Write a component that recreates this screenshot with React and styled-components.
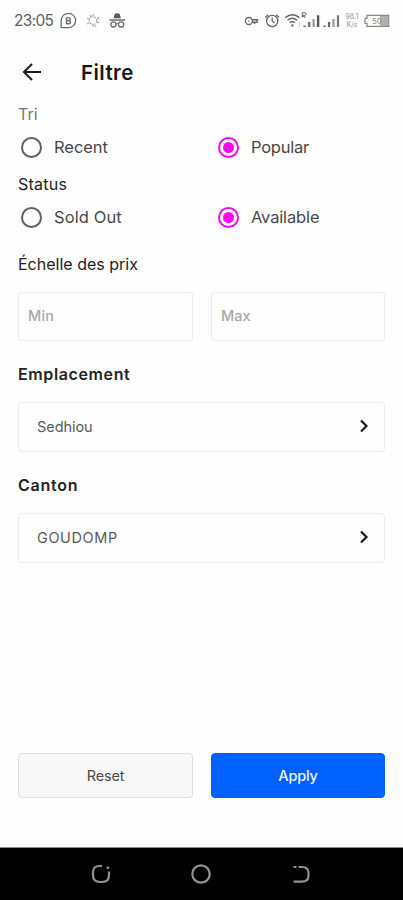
import { useState } from 'react';
import styled, { createGlobalStyle } from 'styled-components';

const GlobalStyle = createGlobalStyle`
  * {
    box-sizing: border-box;
  }

  body {
    margin: 0;
    background: #fefefe;
    font-family: Inter, 'Liberation Sans', sans-serif;
  }
`;

const Screen = styled.div`
  display: flex;
  flex-direction: column;
  width: 403px;
  height: 900px;
  overflow: hidden;
  background: #fefefe;
`;

const StatusBar = styled.div`
  display: flex;
  align-items: center;
  justify-content: space-between;
  height: 40px;
  padding: 0 12px 0 14px;
`;

const Clock = styled.span`
  width: 46px;
  font-size: 15.5px;
  letter-spacing: -0.7px;
  color: #5c5c5c;
`;

const StatusGroup = styled.div`
  display: flex;
  align-items: center;
`;

const Header = styled.header`
  display: flex;
  align-items: center;
  gap: 38px;
  height: 64px;
  padding-left: 21px;
`;

const BackButton = styled.button`
  display: flex;
  padding: 0;
  border: 0;
  background: none;
`;

const Title = styled.h1`
  margin: 0;
  font-size: 20.5px;
  font-weight: 600;
  letter-spacing: ${(p) => p.$tracking}px;
  color: #151515;
`;

const Content = styled.main`
  display: flex;
  flex-direction: column;
  flex: 1;
  padding: 0 18px;
`;

const Label = styled.h2`
  margin: ${(p) => p.$top || 0}px 0 0;
  font-size: 16px;
  line-height: 20px;
  font-weight: ${(p) => (p.$bold ? 600 : 400)};
  letter-spacing: ${(p) => p.$tracking || 0}px;
  color: ${(p) => p.$color || '#222'};
  white-space: nowrap;
`;

const Row = styled.div`
  display: grid;
  grid-template-columns: 175px 174px;
  justify-content: space-between;
  margin-top: ${(p) => p.$top || 0}px;
`;

const RadioRow = styled.div`
  display: grid;
  grid-template-columns: 197px 1fr;
  height: 46px;
  padding-left: 3px;
`;

const RadioLabel = styled.label`
  display: flex;
  align-items: center;
  gap: 12px;
  font-size: 16.5px;
  letter-spacing: ${(p) => p.$tracking}px;
  color: #484848;
`;

const RadioMark = styled.span`
  display: flex;
  align-items: center;
  justify-content: center;
  width: 21px;
  height: 21px;
  border: 2px solid ${(p) => (p.$checked ? '#f808f0' : '#606060')};
  border-radius: 50%;

  &::after {
    content: '';
    width: 11px;
    height: 11px;
    border-radius: 50%;
    background: ${(p) => (p.$checked ? '#f808f0' : 'transparent')};
  }
`;

const HiddenRadio = styled.input`
  display: none;
`;

const PriceInput = styled.input`
  width: 100%;
  height: 49px;
  padding: 0 9px 2px;
  border: 1px solid #ececec;
  border-radius: 3px;
  background: #fefefe;
  font-family: inherit;
  font-size: 14.5px;
  font-weight: 500;
  letter-spacing: ${(p) => p.$tracking}px;
  outline: none;

  &::placeholder {
    color: #a8a8a8;
  }
`;

const Select = styled.button`
  display: flex;
  align-items: center;
  justify-content: space-between;
  height: 50px;
  margin-top: 18px;
  padding: 0 15px 2px 18px;
  border: 1px solid #ececec;
  border-radius: 4px;
  background: #fefefe;
  font-family: inherit;
  font-size: 14.5px;
  letter-spacing: ${(p) => p.$tracking}px;
  color: #5a5a5a;
`;

const Button = styled.button`
  height: 45px;
  padding: 0 0 1px;
  border: 1px solid ${(p) => (p.$primary ? '#0061fe' : '#dfdfdf')};
  border-radius: 4px;
  background: ${(p) => (p.$primary ? '#0061fe' : '#f8f8f8')};
  font-family: inherit;
  font-size: 14.5px;
  font-weight: ${(p) => (p.$primary ? 500 : 400)};
  letter-spacing: ${(p) => p.$tracking}px;
  color: ${(p) => (p.$primary ? '#f2f6ff' : '#4a4a4a')};
`;

const Actions = styled(Row)`
  padding: 0 18px;
  margin-bottom: 49px;
`;

const NavBar = styled.nav`
  display: flex;
  align-items: center;
  justify-content: center;
  gap: 78px;
  height: 53px;
  padding-right: 1px;
  border-top: 1px solid #8a8a8a;
  background: #000;
`;

function NotificationIcons() {
  return (
    <svg width="68" height="20" viewBox="60 10 68 20" fill="none" stroke="#6d6d6d">
      <path d="M61.2 27.5V20.5a7.2 7.2 0 1 1 7.2 7.2H61.2z" strokeWidth="1.3" />
      <path d="M66.5 17.5v6.4M66.5 17.6h2.2a1.4 1.4 0 0 1 0 3h-2.2h2.4a1.6 1.6 0 0 1 0 3.2h-2.4" strokeWidth="1.4" />
      <g stroke="#aaa" strokeWidth="1.2">
        <circle cx="93" cy="20.5" r="3.8" strokeDasharray="2.6 1" />
        <path d="M93 14v2.5M93 24.5V27M87 18l2.2 1M97 22l2.2 1M87 24l2.2-1M97 18.6l2.2-1.2M90 15l1 2M95 25l1 2" />
      </g>
      <path d="M113.5 18.2l1.3-4.4q2.4-.9 4.8 0l1.3 4.4z" fill="#5a5a5a" stroke="none" />
      <path d="M109.5 20h15.6" strokeWidth="1.5" />
      <circle cx="113.4" cy="24.4" r="2.6" strokeWidth="1.3" />
      <circle cx="121.1" cy="24.4" r="2.6" strokeWidth="1.3" />
      <path d="M116 24q1.3-.8 2.6 0" />
    </svg>
  );
}

function SystemIcons() {
  return (
    <svg width="147" height="22" viewBox="244 9 147 22" fill="none" stroke="#666">
      <circle cx="248.9" cy="21" r="3.5" strokeWidth="1.3" />
      <circle cx="248.9" cy="21" r=".8" fill="#777" stroke="none" />
      <path d="M252.400 19.800h6M252 22.300h5.500M257 20v3M254.500 22v2" strokeWidth="1.400" />

      <circle cx="272.2" cy="21" r="5.6" strokeWidth="1.3" />
      <path d="M272.2 17.5V21l2.4 2M265.3 17.6l3-2.8M279.1 17.6l-3-2.8" strokeWidth="1.3" />

      <path d="M285.2 17.6q7.4-5.8 14.2 0M287.4 20.2q5-3.8 9.8 0M289.6 22.8q2.8-2 5.4 0" strokeWidth="1.4" />
      <circle cx="292.4" cy="25.4" r="1.2" fill="#666" stroke="none" />
      <path d="M302.3 17.5v-4.700h2.500a1.200 1.200 0 0 1 0 2.400h-2l2.700 2.300" stroke="#777" strokeWidth="1.100" />
      <path d="M299.5 22.5V27" stroke="#ccc" />
      <path d="M304.6 27v-1.5M309.2 27v-5" strokeWidth="2.200" />
      <path d="M313.6 27v-8" stroke="#999" strokeWidth="2.200" />
      <path d="M318.1 27V15.3" stroke="#555" strokeWidth="2.4" />
      <path d="M324.5 27v-1.5M329 27v-5" strokeWidth="2.200" />
      <path d="M333.5 27v-8" stroke="#999" strokeWidth="2.200" />
      <path d="M338 27V15.3" stroke="#777" strokeWidth="2.200" />

      <g fill="#999" stroke="none" fontFamily="Inter, sans-serif" fontSize="7">
        <text x="345.5" y="19">98.1</text>
        <text x="346.5" y="27.2">K/s</text>
      </g>

      <path d="M367 15.4h21.7v11H367v-3h-2v-5h2z" stroke="#888" strokeWidth="1.2" />
      <path d="M380 16h8.2v10H380z" fill="#b0b0b0" stroke="none" />
      <text x="372" y="24" fill="#888" stroke="none" fontFamily="Inter, sans-serif" fontSize="8">50</text>
    </svg>
  );
}

function BackArrow() {
  return (
    <svg width="22" height="20" viewBox="0 0 22 20" fill="none" stroke="#1c1c1c" strokeWidth="2">
      <path d="M20 10H3M11 2L3 10l8 8" />
    </svg>
  );
}

function Chevron() {
  return (
    <svg width="10" height="14" viewBox="0 0 10 14" fill="none" stroke="#1a1a1a" strokeWidth="2.2">
      <path d="M2 1.5L7.5 7 2 12.5" />
    </svg>
  );
}

function Radio({ name, label, checked, onSelect, tracking }) {
  return (
    <RadioLabel $tracking={tracking}>
      <HiddenRadio type="radio" name={name} checked={checked} onChange={onSelect} />
      <RadioMark $checked={checked} />
      {label}
    </RadioLabel>
  );
}

export default function App() {
  const [sort, setSort] = useState('popular');
  const [status, setStatus] = useState('available');

  return (
    <Screen>
      <GlobalStyle />
      <StatusBar>
        <StatusGroup>
          <Clock>23:05</Clock>
          <NotificationIcons />
        </StatusGroup>
        <SystemIcons />
      </StatusBar>
      <Header>
        <BackButton aria-label="Retour">
          <BackArrow />
        </BackButton>
        <Title $tracking={0.45}>Filtre</Title>
      </Header>
      <Content>
        <Label $color="#777">Tri</Label>
        <RadioRow>
          <Radio name="sort" label="Recent" tracking={-0.05} checked={sort === 'recent'} onSelect={() => setSort('recent')} />
          <Radio name="sort" label="Popular" tracking={-0.25} checked={sort === 'popular'} onSelect={() => setSort('popular')} />
        </RadioRow>
        <Label $top={4} $tracking={0.25}>Status</Label>
        <RadioRow>
          <Radio name="status" label="Sold Out" tracking={0.1} checked={status === 'sold'} onSelect={() => setStatus('sold')} />
          <Radio name="status" label="Available" tracking={-0.15} checked={status === 'available'} onSelect={() => setStatus('available')} />
        </RadioRow>
        <Label $top={14}>Échelle des prix</Label>
        <Row $top={18}>
          <PriceInput placeholder="Min" $tracking={0.2} />
          <PriceInput placeholder="Max" $tracking={0} />
        </Row>
        <Label $bold $top={23} $tracking={0.62}>Emplacement</Label>
        <Select $tracking={-0.05}>
          Sedhiou
          <Chevron />
        </Select>
        <Label $bold $top={23} $tracking={0.75}>Canton</Label>
        <Select $tracking={0.6}>
          GOUDOMP
          <Chevron />
        </Select>
      </Content>
      <Actions>
        <Button $tracking={-0.15}>Reset</Button>
        <Button $primary $tracking={-0.2}>Apply</Button>
      </Actions>
      <NavBar>
        <svg width="22" height="22" viewBox="0 0 22 22" fill="none" stroke="#929292" strokeWidth="2.2">
          <path d="M12 3H9.500Q3 3 3 9.500V12Q3 19 10 19H12Q19 19 19 12V8.500" />
          <path d="M16.500 4.700h2.600" />
        </svg>
        <svg width="22" height="22" viewBox="0 0 22 22" fill="none" stroke="#929292" strokeWidth="2.2">
          <circle cx="11" cy="11" r="8.700" />
        </svg>
        <svg width="22" height="22" viewBox="0 0 22 22" fill="none" stroke="#929292" strokeWidth="2.2">
          <path d="M3.500 4h3M8.500 4H12Q18.500 4 18.500 10V12.500Q18.500 18.700 12 18.700H3.500" />
        </svg>
      </NavBar>
    </Screen>
  );
}
